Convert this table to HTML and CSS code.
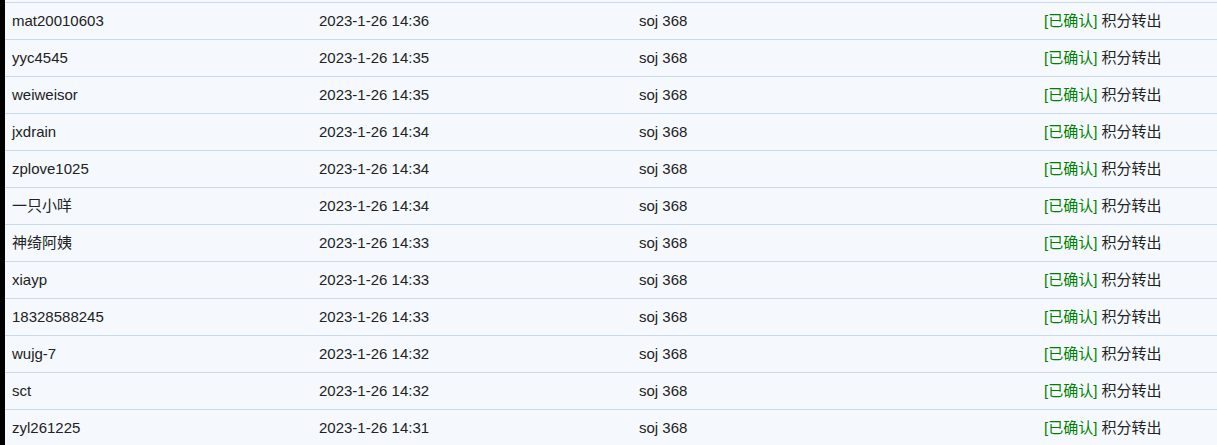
FILE: index.html
```html
<!DOCTYPE html>
<html>
<head>
<meta charset="utf-8">
<link rel="stylesheet" href="styles.css">
</head>
<body>
<div class="page">
  <table class="log">
    <tbody>
      <tr><td>mat20010603</td><td>2023-1-26 14:36</td><td>soj 368</td><td><span class="ok">[已确认]</span> 积分转出</td></tr>
      <tr><td>yyc4545</td><td>2023-1-26 14:35</td><td>soj 368</td><td><span class="ok">[已确认]</span> 积分转出</td></tr>
      <tr><td>weiweisor</td><td>2023-1-26 14:35</td><td>soj 368</td><td><span class="ok">[已确认]</span> 积分转出</td></tr>
      <tr><td>jxdrain</td><td>2023-1-26 14:34</td><td>soj 368</td><td><span class="ok">[已确认]</span> 积分转出</td></tr>
      <tr><td>zplove1025</td><td>2023-1-26 14:34</td><td>soj 368</td><td><span class="ok">[已确认]</span> 积分转出</td></tr>
      <tr><td>一只小咩</td><td>2023-1-26 14:34</td><td>soj 368</td><td><span class="ok">[已确认]</span> 积分转出</td></tr>
      <tr><td>神绮阿姨</td><td>2023-1-26 14:33</td><td>soj 368</td><td><span class="ok">[已确认]</span> 积分转出</td></tr>
      <tr><td>xiayp</td><td>2023-1-26 14:33</td><td>soj 368</td><td><span class="ok">[已确认]</span> 积分转出</td></tr>
      <tr><td>18328588245</td><td>2023-1-26 14:33</td><td>soj 368</td><td><span class="ok">[已确认]</span> 积分转出</td></tr>
      <tr><td>wujg-7</td><td>2023-1-26 14:32</td><td>soj 368</td><td><span class="ok">[已确认]</span> 积分转出</td></tr>
      <tr><td>sct</td><td>2023-1-26 14:32</td><td>soj 368</td><td><span class="ok">[已确认]</span> 积分转出</td></tr>
      <tr><td>zyl261225</td><td>2023-1-26 14:31</td><td>soj 368</td><td><span class="ok">[已确认]</span> 积分转出</td></tr>
    </tbody>
  </table>
</div>
</body>
</html>
```
FILE: styles.css
```css
html, body {
  margin: 0;
  padding: 0;
  background: #000;
}
.page {
  margin-left: 5px;
  min-height: 445px;
  background: #f5f9fd;
  padding-top: 2px;
  font-family: Arial, "Liberation Sans", "Noto Sans CJK SC", sans-serif;
  font-size: 15px;
  color: #222;
}
.log {
  width: 100%;
  border-collapse: collapse;
  border-top: 1px solid #c9dbeb;
  table-layout: fixed;
}
.log td {
  height: 36px;
  padding: 0 0 0 7px;
  border-bottom: 1px solid #c9dbeb;
  vertical-align: middle;
  white-space: nowrap;
  line-height: 18px;
}
.log td:nth-child(1) { width: 300px; }
.log td:nth-child(2) { width: 313px; }
.log td:nth-child(3) { width: 398px; }
.ok { color: #008000; }
```
